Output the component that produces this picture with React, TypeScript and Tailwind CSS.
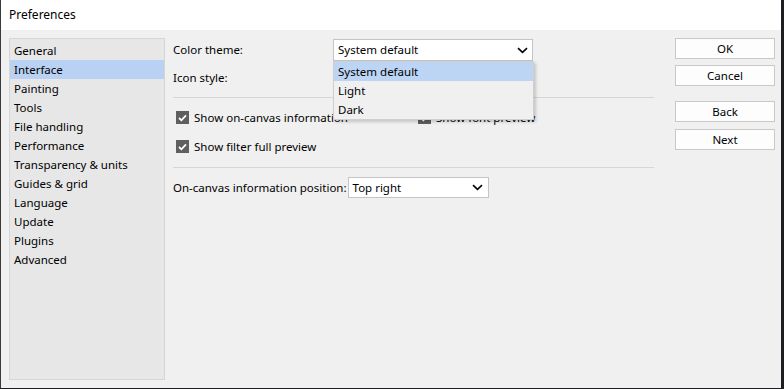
import React from 'react';

const font = { fontFamily: '"Segoe UI", "Noto Sans", sans-serif' };

const pages = [
  'General',
  'Interface',
  'Painting',
  'Tools',
  'File handling',
  'Performance',
  'Transparency & units',
  'Guides & grid',
  'Language',
  'Update',
  'Plugins',
  'Advanced',
];

const Chevron = () => (
  <svg width="11" height="7" viewBox="0 0 11 7" className="shrink-0">
    <path d="M1 1.2 L5.5 5.4 L10 1.2" fill="none" stroke="#000" strokeWidth="1.6" />
  </svg>
);

const Check = ({ label }: { label: string }) => (
  <div className="flex items-center gap-[5px] h-[19px]">
    <span className="w-[13px] h-[13px] bg-[#5f5f5f] flex items-center justify-center">
      <svg width="9" height="8" viewBox="0 0 9 8">
        <path d="M1 4 L3.4 6.3 L8 1.4" fill="none" stroke="#fff" strokeWidth="1.8" />
      </svg>
    </span>
    <span>{label}</span>
  </div>
);

const Button = ({ label, className = '' }: { label: string; className?: string }) => (
  <div className={`h-[21px] w-[100px] bg-[#fdfdfd] border border-[#c9c9c9] flex items-center justify-center ${className}`}>
    {label}
  </div>
);

const App = () => {
  return (
    <div className="w-[784px] h-[389px] bg-[#1e1e22] overflow-hidden" style={font}>
      <div className="w-[781px] h-[388px] bg-[#f0f0f0] border-l border-[#3a3a3a] flex flex-col text-[11.5px] text-black">
        {/* title bar */}
        <div className="h-[31px] bg-white flex items-center pl-[8px] text-[12px]">Preferences</div>

        <div className="flex flex-1 pt-[8px] pl-[8px] pb-[8px]">
          {/* page list */}
          <div className="w-[156px] h-[342px] bg-[#e7e7e7] border border-[#d6d6d6] pt-[2px]">
            {pages.map((p) => (
              <div
                key={p}
                className={`h-[19px] flex items-center pl-[4px] ${p === 'Interface' ? 'bg-[#b9d1f2]' : ''}`}
              >
                {p}
              </div>
            ))}
          </div>

          {/* settings */}
          <div className="relative w-[481px] ml-[8px] pt-[1px]">
            <div className="flex items-center h-[22px]">
              <span className="w-[160px]">Color theme:</span>
              <div className="w-[200px] h-[22px] bg-white border border-[#c4c4c4] flex items-center justify-between pl-[4px] pr-[4px]">
                <span>System default</span>
                <Chevron />
              </div>
            </div>
            <div className="flex items-center h-[22px] mt-[6px]">
              <span>Icon style:</span>
            </div>
            <div className="h-px bg-[#d6d6d6] mt-[8px]" />
            <div className="flex mt-[10px] pl-[3px]">
              <div className="w-[242px]">
                <Check label="Show on-canvas information" />
              </div>
              <Check label="Show font preview" />
            </div>
            <div className="mt-[10px] pl-[3px]">
              <Check label="Show filter full preview" />
            </div>
            <div className="h-px bg-[#d6d6d6] mt-[11px]" />
            <div className="flex items-center mt-[9px] gap-[1px]">
              <span>On-canvas information position:</span>
              <div className="w-[141px] h-[21px] bg-white border border-[#c4c4c4] flex items-center justify-between pl-[4px] pr-[5px]">
                <span>Top right</span>
                <Chevron />
              </div>
            </div>

            {/* open dropdown popup */}
            <div className="absolute left-[160px] top-[23px] w-[201px] h-[59px] bg-[#f0f0f0] border border-[#cfcfcf] shadow-[2px_2px_3px_rgba(0,0,0,0.18)]">
              <div className="h-[19px] bg-[#bcd5f4] flex items-center pl-[4px]">System default</div>
              <div className="h-[19px] flex items-center pl-[4px]">Light</div>
              <div className="h-[19px] flex items-center pl-[4px]">Dark</div>
            </div>
          </div>

          {/* buttons */}
          <div className="flex flex-col ml-[21px]">
            <Button label="OK" />
            <Button label="Cancel" className="mt-[6px]" />
            <Button label="Back" className="mt-[15px]" />
            <Button label="Next" className="mt-[7px]" />
          </div>
        </div>
      </div>
    </div>
  );
};

export default App;
